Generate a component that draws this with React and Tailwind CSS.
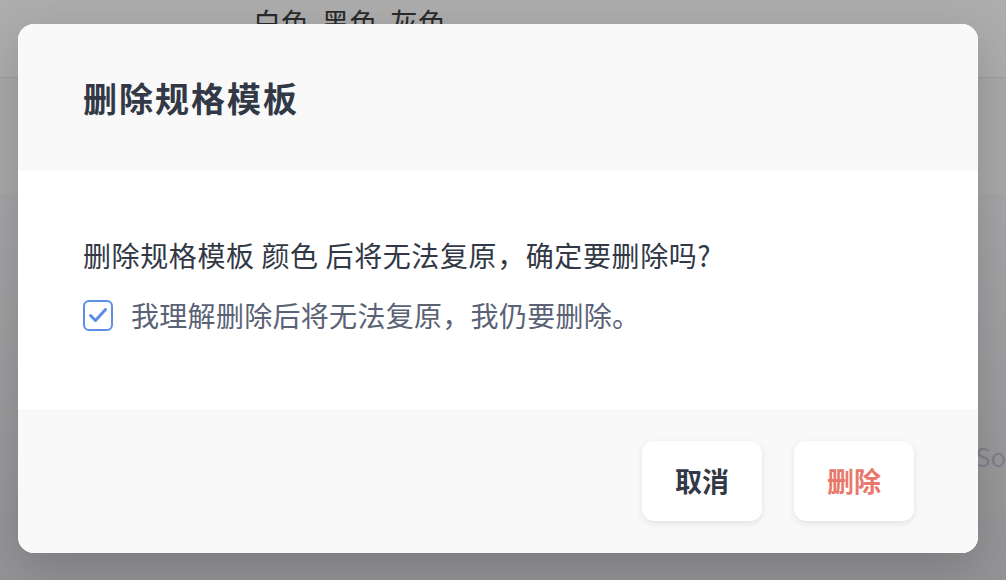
import React, { useState } from 'react';

const font = { fontFamily: '"Noto Sans CJK SC", "Noto Sans", sans-serif' };

function CheckIcon() {
  return (
    <svg width="24" height="24" viewBox="0 0 24 24" fill="none">
      <path d="M4.5 12.5l5 5 10-11" stroke="#5b8be3" strokeWidth="3" strokeLinecap="round" strokeLinejoin="round" />
    </svg>
  );
}

function App() {
  const [agreed, setAgreed] = useState(true);

  return (
    <div className="relative h-[580px] w-full overflow-hidden bg-[#a9a9aa]" style={font}>
      {/* page behind the dialog, dimmed */}
      <div className="flex flex-col">
        <div className="h-[78px] border-b border-[#9c9c9f] bg-[#adadad] pl-[253px] pt-[2px] text-[28px] leading-[40px] text-[#2a2a2a]">
          白色&nbsp;&nbsp;黑色&nbsp;&nbsp;灰色
        </div>
        <div className="h-[116px] bg-[#a9a9aa]" />
        <div className="h-[386px] bg-gradient-to-b from-[#a6a6a8] to-[#949497] pl-[975px] pt-[245px] text-[26px] leading-[34px] text-[#7f818c]">
          Sol
        </div>
      </div>

      {/* dialog */}
      <div className="absolute left-[18px] top-[24px] flex h-[529px] w-[960px] flex-col overflow-hidden rounded-[16px] bg-white shadow-[0_16px_48px_rgba(0,0,0,0.18)]">
        <div className="flex h-[147px] items-center bg-[#f9f9f9] px-[65px]">
          <h2 className="text-[34px] font-bold leading-none tracking-[2px] text-[#323845]">删除规格模板</h2>
        </div>

        <div className="flex h-[238px] flex-col px-[65px] pt-[64px]">
          <p className="text-[28px] leading-[40px] tracking-[0.6px] text-[#323845]">删除规格模板 颜色 后将无法复原，确定要删除吗?</p>
          <label className="mt-[20px] flex cursor-pointer items-center gap-[18px]">
            <button
              type="button"
              onClick={() => setAgreed(!agreed)}
              className="flex h-[31px] w-[30px] items-center justify-center rounded-[6px] border-2 border-[#5c8fe6] bg-white"
            >
              {agreed && <CheckIcon />}
            </button>
            <span className="text-[28px] leading-[40px] tracking-[0.3px] text-[#5a6276]">我理解删除后将无法复原，我仍要删除。</span>
          </label>
        </div>

        <div className="flex flex-1 items-center justify-end gap-[32px] bg-[#f9f9f9] px-[64px]">
          <button className="flex h-[80px] w-[120px] items-center justify-center rounded-[12px] bg-white text-[27px] font-bold text-[#323845] shadow-[0_2px_6px_rgba(0,0,0,0.1)]">
            取消
          </button>
          <button
            disabled={!agreed}
            className="flex h-[80px] w-[120px] items-center justify-center rounded-[12px] bg-white text-[27px] font-bold text-[#e9786c] shadow-[0_2px_6px_rgba(0,0,0,0.1)]"
          >
            删除
          </button>
        </div>
      </div>
    </div>
  );
}

export default App;
